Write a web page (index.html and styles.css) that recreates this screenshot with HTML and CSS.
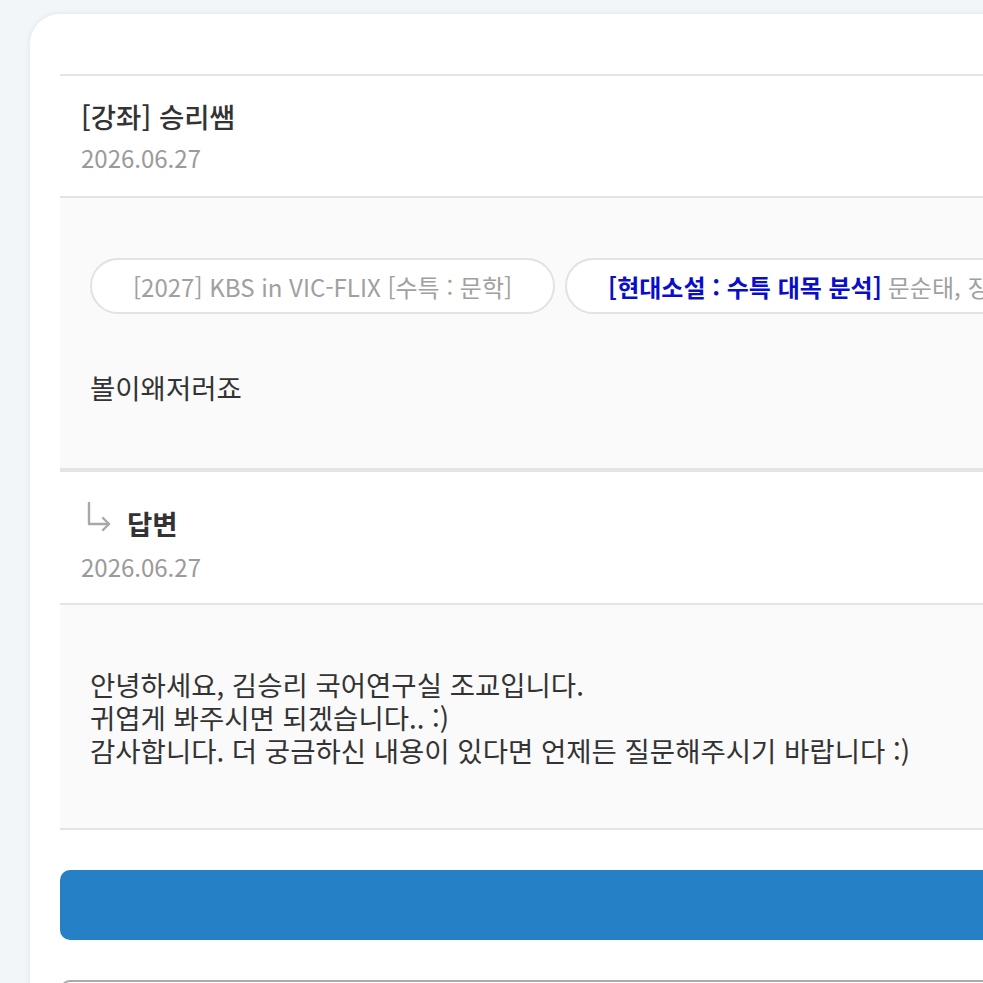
FILE: index.html
```html
<!DOCTYPE html>
<html lang="ko">
<head>
<meta charset="utf-8">
<title>질문 상세</title>
<link rel="stylesheet" href="styles.css">
</head>
<body>
<div class="page">
  <div class="card">
    <div class="q-head">
      <div class="q-title">[강좌] 승리쌤</div>
      <div class="date">2026.06.27</div>
    </div>
    <div class="q-body">
      <div class="pills">
        <span class="pill">[2027] KBS in VIC-FLIX [수특 : 문학]</span>
        <span class="pill"><b class="pill-strong">[현대소설 : 수특 대목 분석]</b> 문순태, 징소리</span>
      </div>
      <p class="text">볼이왜저러죠</p>
    </div>
    <div class="a-head">
      <div class="a-title">
        <svg class="arrow" width="30" height="30" viewBox="0 0 30 30" fill="none" stroke="#a8a8a8" stroke-width="2.4" stroke-linecap="round" stroke-linejoin="round">
          <path d="M5 2 V23 H25"/>
          <path d="M19 17 L25 23 L19 29"/>
        </svg>
        <span>답변</span>
      </div>
      <div class="date">2026.06.27</div>
    </div>
    <div class="a-body">
      <p class="text">안녕하세요, 김승리 국어연구실 조교입니다.<br>귀엽게 봐주시면 되겠습니다.. :)<br>감사합니다. 더 궁금하신 내용이 있다면 언제든 질문해주시기 바랍니다 :)</p>
    </div>
    <div class="btn-primary"></div>
    <div class="btn-outline"></div>
  </div>
</div>
</body>
</html>
```

FILE: styles.css
```css
html, body {
  margin: 0;
  padding: 0;
  overflow: hidden;
}
body {
  background: #f3f6f9;
  font-family: "Noto Sans CJK KR", "Noto Sans", sans-serif;
  color: #333;
}
.page {
  padding: 14px 0 0 30px;
}
.card {
  width: 1300px;
  background: #fff;
  border-radius: 30px;
  box-shadow: 0 0 6px rgba(0, 0, 0, 0.08);
  padding: 60px 30px 40px;
  overflow: hidden;
}
.q-head {
  border-top: 2px solid #e4e4e4;
  border-bottom: 2px solid #e4e4e4;
  padding: 22px 21px;
}
.q-title {
  font-size: 27.5px;
  font-weight: 500;
  line-height: 36px;
  color: #333;
}
.date {
  margin-top: 8px;
  font-size: 24px;
  line-height: 32px;
  color: #9a9a9a;
}
.q-body {
  background: #fafafa;
  padding: 60px 30px 64px;
  border-bottom: 2px solid #e4e4e4;
}
.pills {
  display: flex;
  gap: 10px;
  white-space: nowrap;
}
.pill {
  display: flex;
  align-items: center;
  height: 56px;
  box-sizing: border-box;
  padding: 0 41px 0 41px;
  background: #fff;
  border: 2px solid #e2e2e2;
  border-radius: 28px;
  font-size: 24px;
  color: #a0a0a0;
}
.pill-strong {
  color: #0a0ec8;
  font-weight: 700;
  margin-right: 6px;
}
.text {
  margin: 57px 0 0;
  font-size: 27.5px;
  line-height: 33px;
  color: #333;
}
.a-head {
  border-top: 2px solid #e4e4e4;
  border-bottom: 2px solid #e4e4e4;
  padding: 33px 21px 20px;
}
.a-title {
  display: flex;
  align-items: flex-start;
  font-size: 27.5px;
  font-weight: 700;
  line-height: 36px;
  color: #333;
}
.arrow {
  margin: -4px 13px 0 3px;
}
.a-title + .date {
  margin-top: 10px;
}
.a-body {
  background: #fafafa;
  padding: 63px 30px 61px;
  border-bottom: 2px solid #e4e4e4;
}
.a-body .text {
  margin: 0;
}
.btn-primary {
  margin-top: 40px;
  height: 70px;
  border-radius: 10px;
  background: #2680c6;
}
.btn-outline {
  margin-top: 40px;
  height: 60px;
  border: 2px solid #aaa;
  border-radius: 10px;
}
```
